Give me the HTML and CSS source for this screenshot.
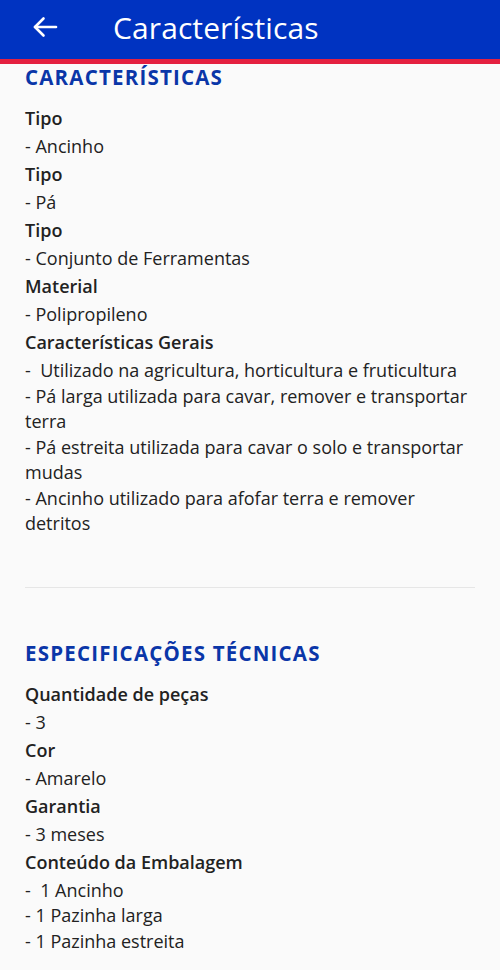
FILE: index.html
```html
<!DOCTYPE html>
<html lang="pt-BR">

<head>
  <meta charset="UTF-8">
  <meta name="viewport" content="width=device-width, initial-scale=1">
  <title>Características</title>
  <link rel="stylesheet" href="styles.css">
</head>

<body>
  <header class="topbar">
    <button class="back" aria-label="Voltar">
      <svg width="26" height="22" viewBox="0 0 26 22" fill="none" stroke="#fff" stroke-width="2.6" stroke-linecap="round" stroke-linejoin="round">
        <path d="M24 11H3"></path>
        <path d="M11.5 2.5L3 11l8.5 8.5"></path>
      </svg>
    </button>
    <h1>Características</h1>
  </header>

  <main class="content">
    <section class="block">
      <h2>CARACTERÍSTICAS</h2>
      <dl>
        <dt>Tipo</dt>
        <dd>- Ancinho</dd>
        <dt>Tipo</dt>
        <dd>- Pá</dd>
        <dt>Tipo</dt>
        <dd>- Conjunto de Ferramentas</dd>
        <dt>Material</dt>
        <dd>- Polipropileno</dd>
        <dt>Características Gerais</dt>
        <dd>-&nbsp; Utilizado na agricultura, horticultura e fruticultura<br>- Pá larga utilizada para cavar, remover e transportar terra<br>- Pá estreita utilizada para cavar o solo e transportar mudas<br>- Ancinho utilizado para afofar terra e remover detritos</dd>
      </dl>
    </section>

    <hr class="divider">

    <section class="block">
      <h2>ESPECIFICAÇÕES TÉCNICAS</h2>
      <dl>
        <dt>Quantidade de peças</dt>
        <dd>- 3</dd>
        <dt>Cor</dt>
        <dd>- Amarelo</dd>
        <dt>Garantia</dt>
        <dd>- 3 meses</dd>
        <dt>Conteúdo da Embalagem</dt>
        <dd>-&nbsp; 1 Ancinho<br>- 1 Pazinha larga<br>- 1 Pazinha estreita</dd>
      </dl>
    </section>
  </main>
</body>

</html>
```

FILE: styles.css
```css
/* Reset */

*,
*::before,
*::after {
  box-sizing: border-box;
  margin: 0;
  padding: 0;
}

:root {
  --brand-blue: #0033c1;
  --brand-red: #e4203f;
  --heading-blue: #0a36a8;
  --text-color: #222;
  --bg-color: #fafafa;
  --font-family: "Open Sans", "Noto Sans", sans-serif;
}

body {
  font-family: var(--font-family);
  background-color: var(--bg-color);
  color: var(--text-color);
  width: 500px;
}

/* Top bar */

.topbar {
  height: 64px;
  background-color: var(--brand-blue);
  border-bottom: 5px solid var(--brand-red);
  display: flex;
  align-items: center;
  padding: 0 0 5px 30px;
}

.back {
  background: none;
  border: 0;
  width: 30px;
  height: 30px;
  display: flex;
  align-items: center;
  justify-content: center;
}

.topbar h1 {
  color: #fff;
  font-weight: 400;
  font-size: 30px;
  letter-spacing: 0.1px;
  margin-left: 53px;
}

/* Content */

.content {
  padding: 0 25px;
}

.block h2 {
  color: var(--heading-blue);
  font-size: 20.5px;
  font-weight: 700;
  letter-spacing: 1.2px;
  line-height: 26px;
  margin-bottom: 16px;
}

dl {
  font-size: 18px;
}

dt {
  font-weight: 600;
  line-height: 25.5px;
  margin-bottom: 2.5px;
}

dd {
  line-height: 25.5px;
  margin-bottom: 2.5px;
}

.divider {
  border: 0;
  border-top: 1.5px solid #e6e6e6;
  margin: 50px 0 52px;
}
```
